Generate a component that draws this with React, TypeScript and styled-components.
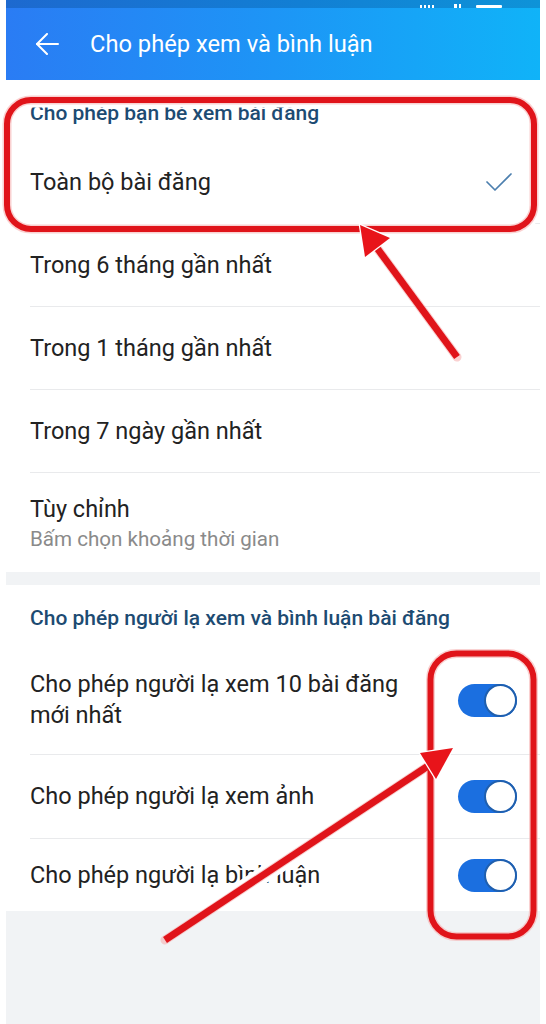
import React from "react";
import styled, { createGlobalStyle } from "styled-components";

const Global = createGlobalStyle`
  html, body { margin: 0; padding: 0; background: #ffffff; }
  body { font-family: Roboto, "Noto Sans", "Liberation Sans", sans-serif; }
  * { box-sizing: border-box; }
`;

const Page = styled.div`
  position: relative;
  width: 546px;
  height: 1024px;
  overflow: hidden;
  background: #ffffff;
`;

const Screen = styled.div`
  margin: 0 6px;
  height: 1024px;
  display: flex;
  flex-direction: column;
  background: #f1f3f5;
`;

const StatusBar = styled.div`
  height: 8px;
  display: flex;
  justify-content: flex-end;
  align-items: flex-end;
  padding-right: 30px;
  background: linear-gradient(90deg, #1d69cf 0%, #127fd4 55%, #0e93d8 100%);
`;

const Header = styled.header`
  height: 72px;
  display: flex;
  align-items: center;
  gap: 31px;
  padding-left: 29px;
  background: linear-gradient(90deg, #2a7cf4 0%, #1d95f6 50%, #10b3f8 100%);
  color: #ffffff;
`;

const Title = styled.h1`
  margin: 0;
  font-size: 23.7px;
  font-weight: 400;
`;

const Section = styled.section`
  background: #ffffff;
  margin-bottom: 13px;
`;

const SectionTitle = styled.div`
  height: 61px;
  padding: 21px 0 0 24px;
  line-height: 24px;
  font-size: 21px;
  font-weight: 500;
  color: #1d4b72;
`;

const Row = styled.div<{ $h: number; $last?: boolean; $pr?: number }>`
  height: ${(p) => p.$h}px;
  margin-left: 24px;
  padding-right: ${(p) => p.$pr ?? 28}px;
  display: flex;
  align-items: center;
  justify-content: space-between;
  border-bottom: ${(p) => (p.$last ? "none" : "1px solid #e9eaec")};
`;

const Label = styled.div<{ $max?: number }>`
  font-size: 23.5px;
  line-height: 31px;
  color: #222222;
  max-width: ${(p) => (p.$max ? `${p.$max}px` : "none")};
`;

const Stack = styled.div`
  display: flex;
  flex-direction: column;
  gap: 2px;
`;

const Sub = styled.div`
  font-size: 20.6px;
  line-height: 24px;
  color: #8a8a8a;
`;

const Track = styled.div`
  position: relative;
  width: 59px;
  height: 33px;
  border-radius: 17px;
  background: #1b6fe0;
  flex-shrink: 0;
`;

const Knob = styled.div`
  position: absolute;
  right: 0;
  top: 0;
  width: 33px;
  height: 33px;
  border-radius: 50%;
  background: #ffffff;
  border: 2px solid #1f5fae;
`;

const Fill = styled.div`
  flex: 1;
  background: #f1f3f5;
`;

const Overlay = styled.svg`
  position: absolute;
  left: 0;
  top: 0;
  pointer-events: none;
`;

const BackIcon = () => (
  <svg width="24" height="22" viewBox="0 0 24 22" fill="none" stroke="#fff" strokeWidth="2" strokeLinecap="round" strokeLinejoin="round">
    <line x1="2" y1="11" x2="23" y2="11" />
    <polyline points="12,1 2,11 12,21" />
  </svg>
);

const Check = () => (
  <svg width="26" height="18" viewBox="0 0 26 18" fill="none" stroke="#4c7fae" strokeWidth="1.7" strokeLinecap="round" strokeLinejoin="round">
    <polyline points="1,9 9,17 25,1" />
  </svg>
);

const StatusIcons = () => (
  <svg width="90" height="4" viewBox="0 0 90 4" fill="#ffffff">
    <rect x="0" y="1" width="2" height="3" />
    <rect x="4" y="1" width="2" height="3" />
    <rect x="8" y="1" width="2" height="3" />
    <rect x="12" y="1" width="2" height="3" />
    <rect x="34" y="0" width="3" height="4" />
    <rect x="39" y="0" width="2" height="4" />
    <rect x="56" y="1" width="26" height="3" rx="1" />
  </svg>
);

const Toggle = () => (
  <Track>
    <Knob />
  </Track>
);

const Annotations = () => (
  <Overlay width="546" height="1024" viewBox="0 0 546 1024">
    <rect x="7" y="100" width="527" height="129" rx="24" fill="none" stroke="#ffffff" strokeWidth="15" />
    <line x1="236" y1="893" x2="300" y2="851" stroke="#ffffff" strokeWidth="17" />
    <g fill="none" stroke="#f6b3b3" strokeWidth="9" strokeLinecap="round" opacity="0.6">
      <rect x="7" y="100" width="527" height="129" rx="24" />
      <rect x="430.5" y="653.5" width="103" height="283" rx="26" />
      <line x1="457" y1="357" x2="377" y2="248" />
      <line x1="165" y1="940" x2="428" y2="766" />
    </g>
    <g fill="none" stroke="#e0141a" strokeWidth="6">
      <rect x="7" y="100" width="527" height="129" rx="24" />
      <rect x="430.5" y="653.5" width="103" height="283" rx="26" />
    </g>
    <g stroke="#e0141a" strokeWidth="7" strokeLinecap="butt">
      <line x1="457" y1="357" x2="377" y2="248" />
      <line x1="165" y1="940" x2="428" y2="766" />
    </g>
    <g fill="#e8141a" stroke="#ffffff" strokeWidth="2.5" strokeLinejoin="round" style={{ paintOrder: "stroke" }}>
      <polygon points="360,225 390,238 365,257" />
      <polygon points="453,748 420,753 436,779" />
    </g>
  </Overlay>
);

export default function App() {
  return (
    <>
      <Global />
      <Page>
        <Screen>
          <StatusBar>
            <StatusIcons />
          </StatusBar>
          <Header>
            <BackIcon />
            <Title>Cho phép xem và bình luận</Title>
          </Header>
          <Section>
            <SectionTitle>Cho phép bạn bè xem bài đăng</SectionTitle>
            <Row $h={83}>
              <Label>Toàn bộ bài đăng</Label>
              <Check />
            </Row>
            <Row $h={83}>
              <Label>Trong 6 tháng gần nhất</Label>
            </Row>
            <Row $h={83}>
              <Label>Trong 1 tháng gần nhất</Label>
            </Row>
            <Row $h={83}>
              <Label>Trong 7 ngày gần nhất</Label>
            </Row>
            <Row $h={99} $last>
              <Stack>
                <Label>Tùy chỉnh</Label>
                <Sub>Bấm chọn khoảng thời gian</Sub>
              </Stack>
            </Row>
          </Section>
          <Section>
            <SectionTitle>Cho phép người lạ xem và bình luận bài đăng</SectionTitle>
            <Row $h={109} $pr={23}>
              <Label $max={395}>Cho phép người lạ xem 10 bài đăng mới nhất</Label>
              <Toggle />
            </Row>
            <Row $h={84} $pr={23}>
              <Label>Cho phép người lạ xem ảnh</Label>
              <Toggle />
            </Row>
            <Row $h={72} $pr={23} $last>
              <Label>Cho phép người lạ bình luận</Label>
              <Toggle />
            </Row>
          </Section>
          <Fill />
        </Screen>
        <Annotations />
      </Page>
    </>
  );
}
